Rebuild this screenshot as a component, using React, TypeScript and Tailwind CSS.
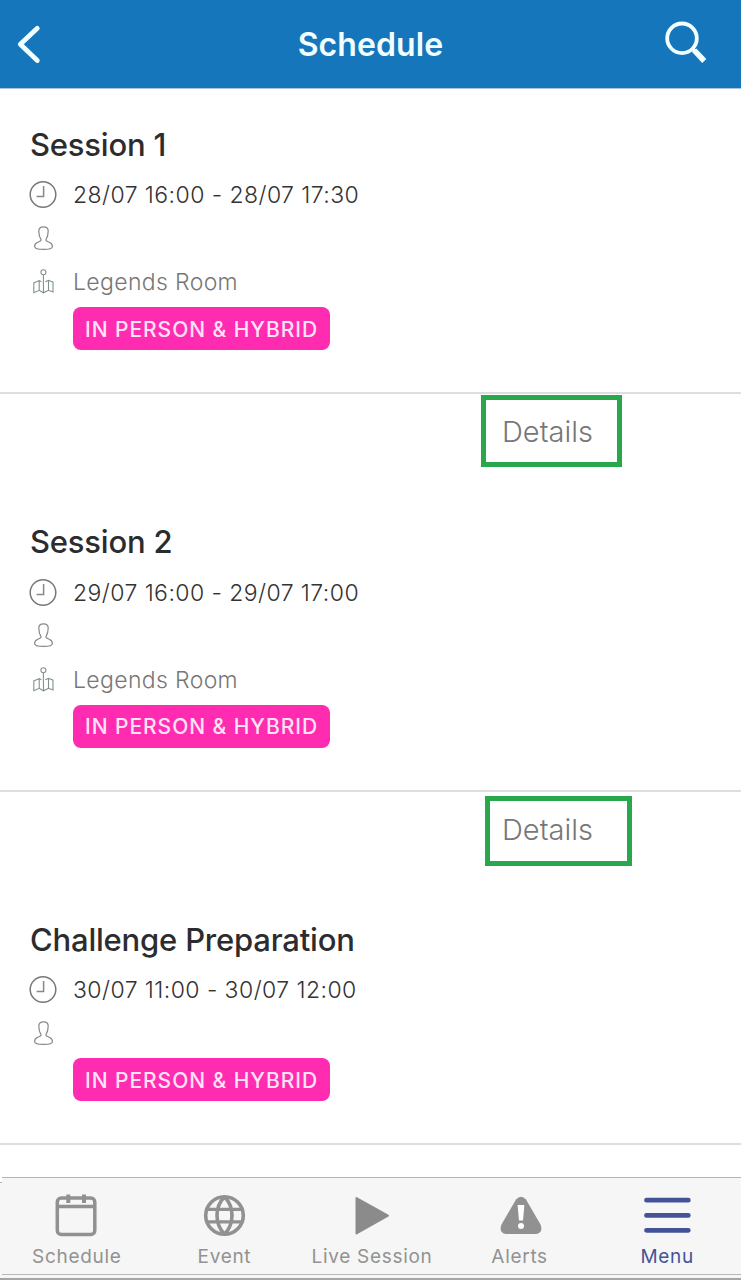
import type { ReactNode } from "react";

type Session = {
  title: string;
  time: string;
  room?: string;
  boxClass?: string;
};

const sessions: Session[] = [
  {
    title: "Session 1",
    time: "28/07 16:00 - 28/07 17:30",
    room: "Legends Room",
    boxClass: "mt-px ml-[481px] w-[141px] h-[72px] pl-4 pt-[2px]",
  },
  {
    title: "Session 2",
    time: "29/07 16:00 - 29/07 17:00",
    room: "Legends Room",
    boxClass: "mt-[4.5px] ml-[485px] w-[147px] h-[70px] pl-3 pb-[2px]",
  },
  { title: "Challenge Preparation", time: "30/07 11:00 - 30/07 12:00" },
];

function BackIcon() {
  return (
    <svg width="60" height="88" viewBox="0 0 60 88" fill="none" stroke="#f2ffff" strokeWidth="4.8" strokeLinecap="round" strokeLinejoin="round">
      <path d="M37.3 28.3L20.3 44.3l17 16.2" />
    </svg>
  );
}

function SearchIcon() {
  return (
    <svg width="80" height="88" viewBox="0 0 80 88" fill="none" stroke="#f2ffff">
      <circle cx="21" cy="38.3" r="14.8" strokeWidth="3.8" />
      <path d="M31 48.3l3 3" strokeWidth="4" />
      <path d="M33.3 50.3l10 10.7" strokeWidth="5.6" />
    </svg>
  );
}

function ClockIcon() {
  return (
    <svg width="30" height="30" viewBox="0 0 30 30" fill="none" stroke="#777" strokeWidth="1.5">
      <circle cx="15" cy="14.5" r="12.8" />
      <path d="M15.6 6v10.400H8.600" stroke="#888" />
    </svg>
  );
}

function PersonIcon() {
  return (
    <svg width="30" height="30" viewBox="0 0 30 30" fill="none" stroke="#888" strokeWidth="1.2">
      <path d="M15.5 2.900c-3.200 0-4.800 1.500-4.700 4.300.1 3.400.4 5.400 1.900 7.600.7 1.200.3 2-.8 2.500l-2.600 1.200c-1.900.9-2.700 2.200-2.700 4 0 2.300 2.900 2.900 8.900 2.900s8.900-.6 8.900-2.900c0-1.800-.8-3.100-2.700-4l-2.600-1.200c-1.100-.5-1.500-1.300-.8-2.500 1.500-2.200 1.800-4.200 1.900-7.600.1-2.800-1.500-4.300-4.700-4.300z" />
    </svg>
  );
}

function MapIcon() {
  return (
    <svg width="30" height="30" viewBox="0 0 30 30" fill="none" stroke="#849090" strokeWidth="1.1">
      <circle cx="15.4" cy="5.2" r="2.5" />
      <path d="M15.4 7.7v11.500M13.400 14.800l-2.200-1.300-5.400 2.400v9.800l5.400-2.400 4.300 2.500 5-2.500 4.500 1.700v-9.800l-4.500-1.900-3.200 1.500M11.200 13.500v9.800M20.500 13.300v10M15.500 19.200v6.600" />
    </svg>
  );
}

function Row({ icon, children, className }: { icon: ReactNode; children?: ReactNode; className: string }) {
  return (
    <div className={`flex items-center pl-7 ${className}`}>
      {icon}
      <span className="ml-[15px] pt-px whitespace-nowrap">{children}</span>
    </div>
  );
}

function SessionCard({ session }: { session: Session }) {
  return (
    <article className="border-b-2 border-[#dedede] pt-[36.5px] pb-[42px]">
      <h2 className="h-10 pl-[30px] text-[31px] leading-10 font-medium tracking-[-0.2px] text-[#2c2c2e]">
        {session.title}
      </h2>
      <Row icon={<ClockIcon />} className="mt-[8.5px] h-11 text-[23px] font-light tracking-[0.43px] text-[#333]">
        {session.time}
      </Row>
      <Row icon={<PersonIcon />} className="h-[43px]" />
      {session.room && (
        <Row icon={<MapIcon />} className="h-11 text-[23px] font-light tracking-[0.35px] text-[#777]">
          {session.room}
        </Row>
      )}
      <div className="mt-[3px] ml-[73px] flex h-[43px] w-[257px] items-center justify-center rounded-lg bg-[#ff2bb0] pt-[2px] text-[21px] font-medium tracking-[0.95px] whitespace-nowrap text-[#ffe3f6]">
        IN PERSON &amp; HYBRID
      </div>
    </article>
  );
}

function CalendarIcon() {
  return (
    <svg width="48" height="48" viewBox="0 0 48 48" fill="none" stroke="#919191">
      <rect x="4.3" y="6" width="37.5" height="36.5" rx="4" strokeWidth="3.5" />
      <path d="M4.5 14.5h37.500" strokeWidth="3.4" />
      <path d="M15.300 2.500v8.500M31 2.500v8.500" strokeWidth="4" />
    </svg>
  );
}

function GlobeIcon() {
  return (
    <svg width="48" height="48" viewBox="0 0 48 48" fill="none" stroke="#919191" strokeWidth="3.6">
      <circle cx="24.500" cy="23.500" r="18.800" />
      <path d="M24.500 4.700C14.500 15 14.500 32 24.500 42.300M24.500 4.700C34.500 15 34.500 32 24.500 42.300" />
      <path d="M7 17.300h35M7 29.800h35" strokeWidth="3.200" />
    </svg>
  );
}

function PlayIcon() {
  return (
    <svg width="48" height="48" viewBox="0 0 48 48" fill="#8b8b8b" stroke="#8b8b8b" strokeWidth="2" strokeLinejoin="round">
      <path d="M8.500 6v35.500l31.500-17.800z" />
    </svg>
  );
}

function AlertIcon() {
  return (
    <svg width="48" height="48" viewBox="0 0 48 48">
      <path d="M20 7.500Q25 2 30 7.500L44.500 32.500Q47.500 41 40 42H10Q2.500 41 5.500 32.500z" fill="#919191" />
      <path d="M21.600 13h6.800l-1.400 15.500h-4z" fill="#fff" />
      <circle cx="25" cy="34" r="3" fill="#fff" />
    </svg>
  );
}

function MenuIcon() {
  return (
    <svg width="48" height="48" viewBox="0 0 48 48" stroke="#445397" strokeWidth="4.8" strokeLinecap="round">
      <path d="M3.500 8.200h41.800M3.500 23.400h41.800M3.500 38.300h41.800" />
    </svg>
  );
}

const tabs = [
  { label: "Schedule", icon: <CalendarIcon /> },
  { label: "Event", icon: <GlobeIcon /> },
  { label: "Live Session", icon: <PlayIcon /> },
  { label: "Alerts", icon: <AlertIcon /> },
  { label: "Menu", icon: <MenuIcon />, active: true },
];

export default function App() {
  return (
    <div className="flex h-[1280px] w-[741px] flex-col overflow-hidden bg-white font-['Inter',sans-serif]">
      <header className="grid h-[89px] shrink-0 grid-cols-[80px_1fr_80px] border-b border-[#a9c4e4] bg-[#1676bb]">
        <BackIcon />
        <h1 className="pt-px text-center text-[32px] leading-[88px] font-semibold tracking-[0.1px] text-[#f2ffff]">
          Schedule
        </h1>
        <SearchIcon />
      </header>

      <main className="-mt-px flex-1">
        {sessions.map((session) => (
          <div key={session.title}>
            <SessionCard session={session} />
            {session.boxClass && (
              <div className="flex h-[91.5px] items-start">
                <button
                  className={`flex items-center border-[5px] border-[#29a84b] text-[29px] font-light text-[#777] ${session.boxClass}`}
                >
                  Details
                </button>
              </div>
            )}
          </div>
        ))}
      </main>

      <nav className="flex h-[103px] shrink-0 border-b-2 border-[#a5a5a5] bg-[#f6f6f6]">
        <div className="h-[6px] w-[2px] border-b border-[#b5b5b5] bg-white" />
        <div className="grid h-[98px] flex-1 grid-cols-5 border-t border-b border-t-[#b5b5b5] border-b-[#b8b8b8] pt-[14px] pl-px">
          {tabs.map((tab) => (
            <div
              key={tab.label}
              className={`flex flex-col items-center text-[19px] leading-7 tracking-[0.7px] whitespace-nowrap ${
                tab.active ? "text-[#445397]" : "text-[#929292]"
              }`}
            >
              {tab.icon}
              <span className="mt-[3px]">{tab.label}</span>
            </div>
          ))}
        </div>
      </nav>
    </div>
  );
}
